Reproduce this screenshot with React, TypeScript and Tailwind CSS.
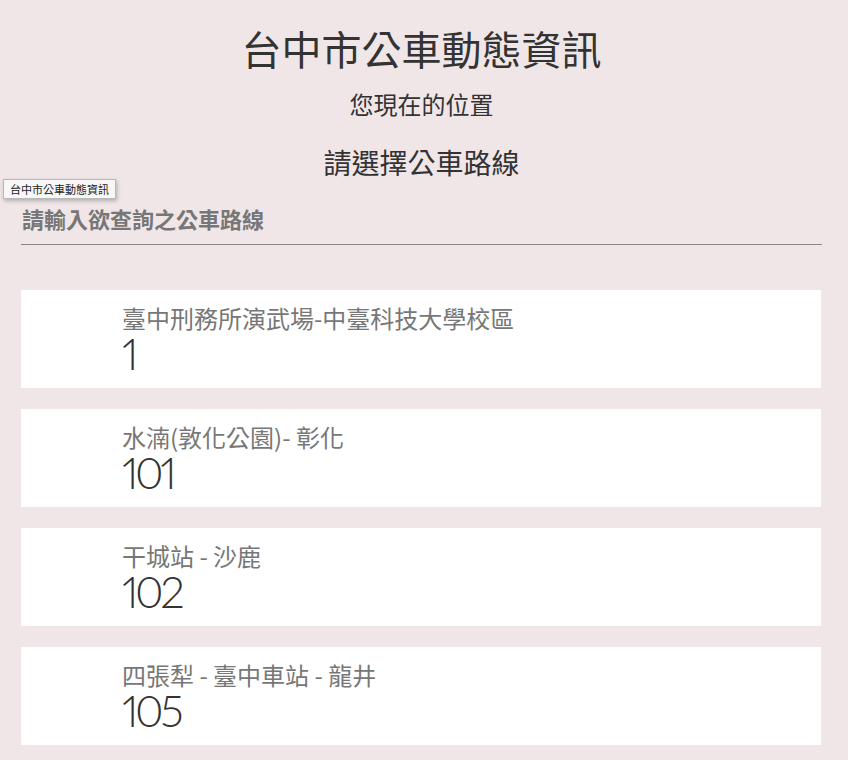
import React from 'react';

const routes = [
  { name: '臺中刑務所演武場-中臺科技大學校區', no: '1' },
  { name: '水湳(敦化公園)- 彰化', no: '101' },
  { name: '干城站 - 沙鹿', no: '102' },
  { name: '四張犁 - 臺中車站 - 龍井', no: '105' },
];

const cjk = { fontFamily: '"Noto Sans CJK TC", "Noto Sans", sans-serif' };

export default function App() {
  return (
    <div className="relative min-h-[760px] bg-[#f0e6e8] pt-6 pb-4" style={cjk}>
      <div className="ml-[21px] w-[801px]">
        <h1 className="text-center text-[40px] leading-[48px] font-normal text-[#333]">台中市公車動態資訊</h1>
        <p className="mt-4 text-center text-[24px] leading-[32px] text-[#333]">您現在的位置</p>
        <h2 className="mt-6 text-center text-[28px] leading-[36px] font-normal text-[#333]">請選擇公車路線</h2>

        <div className="mt-[23px] border-b border-[#8c8587] pb-[11px]">
          <div className="pl-px text-[22px] leading-[30px] font-bold text-[#777]">請輸入欲查詢之公車路線</div>
        </div>

        <ul className="mt-[45px] flex flex-col gap-[21px]">
          {routes.map((r) => (
            <li key={r.no} className="h-[98px] w-[800px] bg-white pl-[101px] pt-[14px]">
              <div className="text-[24px] leading-[28px] text-[#777]">{r.name}</div>
              <div
                className="text-[44px] leading-[42px] font-light tracking-[-3.5px] text-[#333]"
                style={{ fontFamily: 'Lato, "Noto Sans", sans-serif', fontFeatureSettings: '"pnum"' }}
              >
                {r.no}
              </div>
            </li>
          ))}
        </ul>
      </div>

      <div className="absolute left-[3px] top-[179px] h-[20px] w-[113px] border border-[#b9b9b9] bg-[#f7f7f7] px-[6px] text-[11px] leading-[18px] text-[#222] shadow-[1px_2px_4px_rgba(0,0,0,0.25)]">
        台中市公車動態資訊
      </div>
    </div>
  );
}
